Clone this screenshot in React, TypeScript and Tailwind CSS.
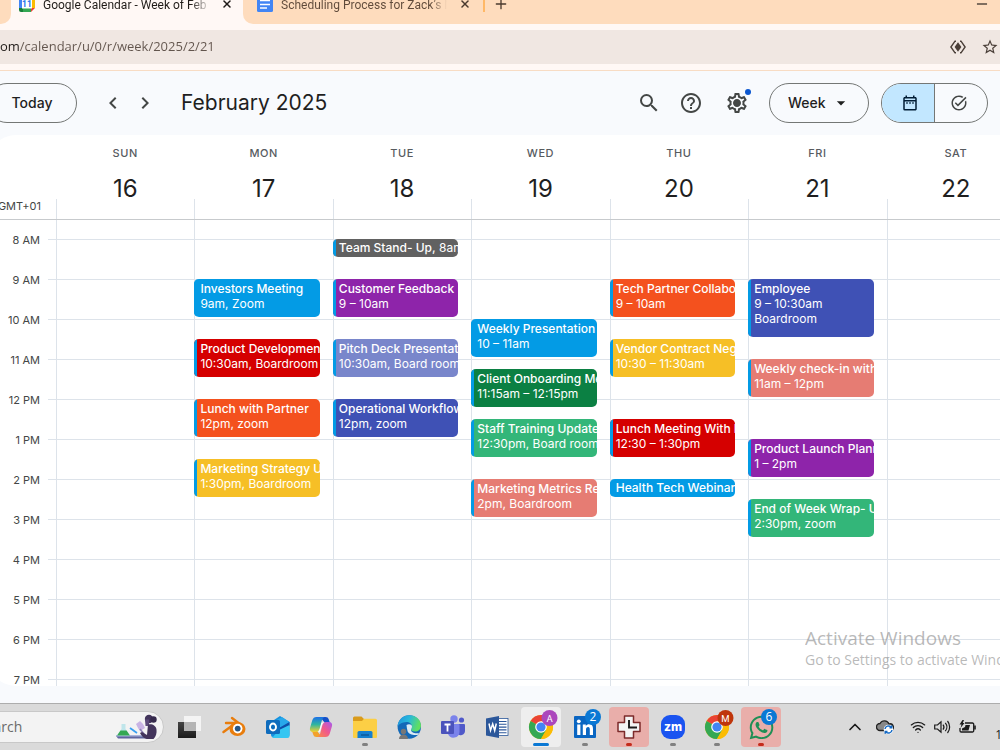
import React from "react";
import {
  MdSearch,
  MdHelpOutline,
  MdOutlineSettings,
  MdArrowDropDown,
  MdOutlineDateRange,
  MdTaskAlt,
  MdChevronLeft,
  MdChevronRight,
  MdStarBorder,
} from "react-icons/md";
import { FaWhatsapp } from "react-icons/fa";
import { X, Plus, Minus, ChevronUp, Wifi } from "lucide-react";

type CalendarEvent = {
  title: string;
  start: number;
  hours: number;
  color: string;
  lines?: string[];
  inline?: string;
};

type Day = { name: string; date: number; events: CalendarEvent[] };

const FIRST_HOUR = 8;

const DAYS: Day[] = [
  { name: "SUN", date: 16, events: [] },
  {
    name: "MON",
    date: 17,
    events: [
      { title: "Investors Meeting", start: 9, hours: 1, color: "bg-[#039be5]", lines: ["9am, Zoom"] },
      { title: "Product Development", start: 10.5, hours: 1, color: "bg-[#d50000]", lines: ["10:30am, Boardroom"] },
      { title: "Lunch with Partner", start: 12, hours: 1, color: "bg-[#f4511e]", lines: ["12pm, zoom"] },
      { title: "Marketing Strategy Update", start: 13.5, hours: 1, color: "bg-[#f6bf26]", lines: ["1:30pm, Boardroom"] },
    ],
  },
  {
    name: "TUE",
    date: 18,
    events: [
      { title: "Team Stand- Up,", start: 8, hours: 0.5, color: "bg-[#616161]", inline: "8am" },
      { title: "Customer Feedback Review", start: 9, hours: 1, color: "bg-[#8e24aa]", lines: ["9 – 10am"] },
      { title: "Pitch Deck Presentation", start: 10.5, hours: 1, color: "bg-[#7986cb]", lines: ["10:30am, Board room"] },
      { title: "Operational Workflow", start: 12, hours: 1, color: "bg-[#3f51b5]", lines: ["12pm, zoom"] },
    ],
  },
  {
    name: "WED",
    date: 19,
    events: [
      { title: "Weekly Presentation", start: 10, hours: 1, color: "bg-[#039be5]", lines: ["10 – 11am"] },
      { title: "Client Onboarding Meeting", start: 11.25, hours: 1, color: "bg-[#0b8043]", lines: ["11:15am – 12:15pm"] },
      { title: "Staff Training Update", start: 12.5, hours: 1, color: "bg-[#33b679]", lines: ["12:30pm, Board room"] },
      { title: "Marketing Metrics Review", start: 14, hours: 1, color: "bg-[#e67c73]", lines: ["2pm, Boardroom"] },
    ],
  },
  {
    name: "THU",
    date: 20,
    events: [
      { title: "Tech Partner Collaboration", start: 9, hours: 1, color: "bg-[#f4511e]", lines: ["9 – 10am"] },
      { title: "Vendor Contract Negotiation", start: 10.5, hours: 1, color: "bg-[#f6bf26]", lines: ["10:30 – 11:30am"] },
      { title: "Lunch Meeting With Partner", start: 12.5, hours: 1, color: "bg-[#d50000]", lines: ["12:30 – 1:30pm"] },
      { title: "Health Tech Webinar", start: 14, hours: 0.5, color: "bg-[#039be5]" },
    ],
  },
  {
    name: "FRI",
    date: 21,
    events: [
      { title: "Employee", start: 9, hours: 1.5, color: "bg-[#3f51b5]", lines: ["9 – 10:30am", "Boardroom"] },
      { title: "Weekly check-in with Team", start: 11, hours: 1, color: "bg-[#e67c73]", lines: ["11am – 12pm"] },
      { title: "Product Launch Planning", start: 13, hours: 1, color: "bg-[#8e24aa]", lines: ["1 – 2pm"] },
      { title: "End of Week Wrap- Up", start: 14.5, hours: 1, color: "bg-[#33b679]", lines: ["2:30pm, zoom"] },
    ],
  },
  { name: "SAT", date: 22, events: [] },
];

const HOURS = ["8 AM", "9 AM", "10 AM", "11 AM", "12 PM", "1 PM", "2 PM", "3 PM", "4 PM", "5 PM", "6 PM", "7 PM"];

/* ---------- browser chrome ---------- */

function CalendarLogo() {
  return (
    <svg viewBox="0 0 16 16" className="size-4 shrink-0">
      <path d="M0 2a2 2 0 0 1 2-2h10v4H4v8H0z" fill="#4285f4" />
      <path d="M12 0h2a2 2 0 0 1 2 2v10h-4z" fill="#fbbc04" />
      <path d="M0 12h12v4H2a2 2 0 0 1-2-2z" fill="#188038" />
      <path d="M4 12h8v4H4z" fill="#34a853" />
      <path d="M12 12h4l-4 4z" fill="#ea4335" />
      <path d="M3 3h10v9.500H3z" fill="#fff" />
      <text x="7.900" y="11" fontSize="8.500" fontWeight="700" textAnchor="middle" fill="#1a73e8" fontFamily="Roboto, sans-serif">
        11
      </text>
    </svg>
  );
}

function DocsLogo() {
  return (
    <svg viewBox="0 0 16 16" className="size-4 shrink-0">
      <rect width="16" height="16" rx="1.500" fill="#4285f4" />
      <path d="M3 4.500h10M3 8.500h10M3 12h7" stroke="#fff" strokeWidth="1.500" />
    </svg>
  );
}

function TabStrip() {
  return (
    <div className="flex h-6 shrink-0 overflow-hidden bg-[#fff8f5] font-[Roboto,'Open_Sans',sans-serif] text-xs leading-4">
      <div className="w-[11px] rounded-br-[10px] bg-[#fedcbd]" />
      <div className="flex w-[232px] items-start gap-2 pl-2">
        <div className="-mt-1">
          <CalendarLogo />
        </div>
        <span className="-mt-[3px] w-[168px] overflow-hidden bg-[linear-gradient(90deg,#1f1b18_88%,#fff8f5_100%)] bg-clip-text whitespace-nowrap text-transparent">
          Google Calendar - Week of Feb
        </span>
        <button aria-label="Close tab" className="-mt-1 flex h-4 w-4 items-center justify-center text-[#1f1b18]">
          <X className="size-3" strokeWidth={3} />
        </button>
      </div>
      <div className="flex flex-1 items-start gap-2 rounded-bl-[10px] bg-[#fedcbd] pl-[14px]">
        <div className="-mt-1">
          <DocsLogo />
        </div>
        <span className="-mt-[3px] w-[166px] overflow-hidden bg-[linear-gradient(90deg,#5f4a3a_90%,#fedcbd_100%)] bg-clip-text whitespace-nowrap text-transparent">
          Scheduling Process for Zack’s M
        </span>
        <button aria-label="Close tab" className="-mt-1 flex h-4 w-5 items-center justify-center text-[#4a3a2e]">
          <X className="size-3" strokeWidth={3} />
        </button>
        <div className="h-3 w-0.5 bg-[#ffb866]" />
        <button aria-label="New tab" className="-mt-1 flex h-4 items-center text-[#4a3a2e]">
          <Plus className="size-4" strokeWidth={2} />
        </button>
        <button aria-label="Minimize" className="-mt-1 mr-[10px] ml-auto flex h-4 items-center text-black">
          <Minus className="size-4" strokeWidth={1.500} />
        </button>
      </div>
    </div>
  );
}

function AddressBar() {
  return (
    <div className="shrink-0 border-b border-[#f8dcc4] bg-[#fff8f5] py-1.5">
      <div className="flex h-[34px] items-center bg-[#f0e7e2]">
        <input
          aria-label="Address"
          defaultValue="om/calendar/u/0/r/week/2025/2/21"
          className="min-w-0 flex-1 bg-[linear-gradient(90deg,#1f1b18_19px,#62554d_19px)] bg-clip-text font-['Open_Sans','Noto_Sans',sans-serif] text-[13px] text-transparent outline-none"
        />
        <button aria-label="Preview page" className="mr-[15px] text-[#4a3f38]">
          <svg viewBox="0 0 16 14" className="h-3.5 w-4" fill="none" stroke="currentColor" strokeWidth="1.400">
            <path d="M6 1.200H5L.9 7 5 12.800h1M10 1.200h1L15.100 7 11 12.800h-1" />
            <path d="M8 2.200 4.600 7 8 11.800 11.400 7z" fill="currentColor" stroke="none" />
          </svg>
        </button>
        <button aria-label="Bookmark" className="mr-px text-[#4a3f38]">
          <MdStarBorder className="size-[18px]" />
        </button>
      </div>
    </div>
  );
}

/* ---------- calendar ---------- */

function Header() {
  return (
    <header className="flex h-16 shrink-0 items-center pr-3 text-[#1f1f1f]">
      <button className="-ml-[13px] h-10 w-[90px] rounded-full border border-[#747775] text-sm font-medium">Today</button>
      <div className="ml-5 flex text-[#444746]">
        <button aria-label="Previous week" className="flex size-8 items-center justify-center">
          <MdChevronLeft className="size-6" />
        </button>
        <button aria-label="Next week" className="flex size-8 items-center justify-center">
          <MdChevronRight className="size-6" />
        </button>
      </div>
      <h1 className="ml-5 text-[21px] leading-7">February 2025</h1>
      <div className="ml-auto flex items-center gap-3">
        <div className="flex gap-0.5 text-[#444746]">
          <button aria-label="Search" className="flex size-10 items-center justify-center">
            <MdSearch className="size-6" />
          </button>
          <button aria-label="Help" className="flex size-10 items-center justify-center">
            <MdHelpOutline className="size-6" />
          </button>
          <button aria-label="Settings" className="relative ml-1 flex size-10 items-center justify-center">
            <MdOutlineSettings className="size-6" />
            <span className="absolute size-1.5 rounded-full bg-[#444746]" />
            <span className="absolute top-1.5 right-1.5 size-1.5 rounded-full bg-[#0b57d0]" />
          </button>
        </div>
        <div className="relative flex items-center">
          <select
            aria-label="View"
            className="h-10 w-[100px] appearance-none rounded-full border border-[#747775] pl-[18px] text-sm font-medium"
          >
            <option>Week</option>
          </select>
          <MdArrowDropDown className="pointer-events-none absolute right-[18px] size-5" />
        </div>
        <div className="flex h-10 w-[107px] overflow-hidden rounded-full border border-[#747775]">
          <button aria-label="Calendar" className="flex flex-1 items-center justify-center border-r border-[#747775] bg-[#c2e7ff] pl-1 text-[#001d35]">
            <MdOutlineDateRange className="size-[18px]" />
          </button>
          <button aria-label="Tasks" className="flex flex-1 items-center justify-center pr-1 text-[#444746]">
            <MdTaskAlt className="size-[18px]" />
          </button>
        </div>
      </div>
    </header>
  );
}

function EventCard({ event }: { event: CalendarEvent }) {
  const row = Math.round((event.start - FIRST_HOUR) * 4) + 1;
  const span = Math.round(event.hours * 4);
  return (
    <button
      className={`mr-[13px] mb-0.5 -ml-px flex min-w-0 overflow-hidden rounded-[5px] text-left text-xs leading-[15px] text-white ${event.color}`}
      style={{ gridRow: `${row} / span ${span}` }}
    >
      <span className="w-[3px] shrink-0 self-stretch bg-[#039be5]" />
      <span className={`min-w-0 flex-1 pl-[3px] whitespace-nowrap ${span > 2 ? "pt-0.5" : "pt-px"}`}>
        <span className="font-[550]">{event.title}</span>
        {event.inline && <span> {event.inline}</span>}
        {event.lines?.map((line) => (
          <span key={line} className="block">
            {line}
          </span>
        ))}
      </span>
    </button>
  );
}

function WeekView() {
  return (
    <main className="-mr-[25px] -ml-3 flex min-h-0 flex-1 flex-col overflow-hidden rounded-l-[28px] bg-white">
      <div className="grid h-[85px] shrink-0 grid-cols-[68px_repeat(7,minmax(0,1fr))] border-b border-[#c7cacd]">
        <div className="flex items-end justify-end pr-[15px] pb-[5px] text-[11px] leading-4 text-[#444746]">GMT+01</div>
        {DAYS.map((day) => (
          <div key={day.name} className="flex flex-col items-center">
            <div className="pt-2.5 text-[11px] leading-4 font-medium tracking-wider text-[#575b5f]">{day.name}</div>
            <div className="mt-3 text-2xl leading-8 text-[#1f1f1f]">{day.date}</div>
            <div className="-mt-1.5 h-5 shrink-0 self-stretch border-l border-[#dde3ea]" />
          </div>
        ))}
      </div>
      <div className="grid min-h-0 flex-1 grid-cols-1 overflow-hidden">
        <div className="col-start-1 row-start-1 pt-[19px]">
          {HOURS.map((hour) => (
            <div key={hour} className="flex h-10">
              <div className="-mt-[7px] w-[52px] text-right text-[11px] leading-4 text-[#444746]">{hour}</div>
              <div className="ml-2 flex-1 border-t border-[#dde3ea]" />
            </div>
          ))}
        </div>
        <div className="col-start-1 row-start-1 grid grid-cols-[68px_repeat(7,minmax(0,1fr))]">
          <div />
          {DAYS.map((day) => (
            <div key={day.name} className="grid grid-cols-1 grid-rows-[repeat(48,10px)] border-l border-[#dde3ea] pt-[19px]">
              {day.events.map((event) => (
                <EventCard key={event.title} event={event} />
              ))}
            </div>
          ))}
        </div>
      </div>
    </main>
  );
}

/* ---------- taskbar ---------- */

function SearchArt() {
  return (
    <svg viewBox="0 0 44 26" className="h-[26px] w-11 shrink-0">
      <path d="M1 22h32l-2 2.500H3z" fill="#5e659e" />
      <path d="M1 21h32v1.500H1z" fill="#a9b4dc" />
      <path d="M6.500 10h4v5l4.500 6.500H2L6.500 15z" fill="#bfe5ea" />
      <path d="M5.500 16.500h6l3.500 5H2z" fill="#35a853" />
      <path d="m15 14 7 5" stroke="#3aa0f0" strokeWidth="1.800" />
      <path d="m21 10 4-3 3 3 2 4-5 3-2-3z" fill="#c9b4e4" />
      <path d="m25 15 4 5" stroke="#8b7fb5" strokeWidth="1.600" fill="none" />
      <circle cx="34" cy="5" r="4.200" fill="#43355c" />
      <circle cx="38.500" cy="5.500" r="3.200" fill="#352a4c" />
      <path d="M30 5.500h4V12h-3.500z" fill="#5c4a7a" />
      <path d="M33 10.500c4-1 8 1 8.500 5 .4 4-.5 7-3 9.500h-7c-3-1-5-3-6.500-6l2-1 5 3z" fill="#43355c" />
    </svg>
  );
}

function TaskViewIcon() {
  return (
    <svg viewBox="0 0 24 24" className="size-6">
      <defs>
        <linearGradient id="tvDark" x1="0" y1="0" x2="0" y2="1">
          <stop offset="0" stopColor="#444" />
          <stop offset="1" stopColor="#1b1b1b" />
        </linearGradient>
      </defs>
      <rect x="1" y="7" width="18" height="16" fill="url(#tvDark)" />
      <rect x="7" y="1" width="17" height="15" fill="#f4f4f4" />
      <rect x="7" y="7" width="12" height="9" fill="#b5b5b5" />
    </svg>
  );
}

function BlenderIcon() {
  return (
    <svg viewBox="0 0 24 24" className="ml-0.5 size-6" fill="none">
      <path d="M10 3 18.500 9.500M4 8h12M1.500 17 13 8.500" stroke="#e87d0d" strokeWidth="2.400" strokeLinecap="round" />
      <ellipse cx="15.500" cy="14" rx="8" ry="7" fill="#e87d0d" />
      <circle cx="15.700" cy="13.600" r="4.800" fill="#fff" />
      <circle cx="15.700" cy="13.600" r="2.900" fill="#265787" />
    </svg>
  );
}

function OutlookIcon() {
  return (
    <svg viewBox="0 0 24 24" className="ml-0.5 size-6">
      <path d="M5 7 14 1l9.500 6v13a2 2 0 0 1-2 2H7a2 2 0 0 1-2-2z" fill="#1490df" />
      <path d="M8 6.500 16 2l7.500 5L14 13z" fill="#28a8ea" />
      <path d="M23.500 7 13 13v4l10.500-6z" fill="#0f4fa8" />
      <path d="M13 15 23.500 10v11a2 2 0 0 1-2 2H6z" fill="#35c6f2" />
      <rect x="0" y="5" width="14" height="14" rx="1.500" fill="#0f6cbd" />
      <ellipse cx="7" cy="12" rx="3" ry="3.500" fill="none" stroke="#fff" strokeWidth="1.900" />
    </svg>
  );
}

function CopilotIcon() {
  return (
    <svg viewBox="0 0 24 24" className="size-6">
      <defs>
        <linearGradient id="cpA" x1="0" y1="0" x2="0" y2="1">
          <stop offset="0" stopColor="#1b6fe8" />
          <stop offset=".5" stopColor="#2fb5a0" />
          <stop offset="1" stopColor="#f5d02f" />
        </linearGradient>
        <linearGradient id="cpB" x1="1" y1="0" x2="0" y2="1">
          <stop offset="0" stopColor="#a55cf0" />
          <stop offset=".5" stopColor="#f0588c" />
          <stop offset="1" stopColor="#fb8a4a" />
        </linearGradient>
      </defs>
      <path d="M11 2h5.500c1.800 0 2.800.8 3.300 2.500L21 8h-5z" fill="#1550c8" />
      <path d="M13 22H7.500c-1.800 0-2.800-.8-3.300-2.500L3 16h5z" fill="#f2a12c" />
      <path d="M7.500 2h8c-1.500.7-2.300 2-2.800 4l-2 7.500C10 16 8.700 17 6.700 17H4C1.500 17 .4 15.300 1 13l2.200-7.500C4 3 5.300 2 7.500 2z" fill="url(#cpA)" />
      <path d="M16.500 22h-8c1.500-.7 2.300-2 2.800-4l2-7.500C14 8 15.300 7 17.300 7H20c2.500 0 3.600 1.700 3 4l-2.200 7.500c-.8 2.500-2.100 3.500-4.300 3.500z" fill="url(#cpB)" />
      <path d="M15.500 7.200c-1.600.4-2.300 1.600-2.700 3.300l-1.800 6.300h-2.300c1.200-.6 1.800-1.800 2.200-3.300l1.600-5.800z" fill="#fff" />
    </svg>
  );
}

function FolderIcon() {
  return (
    <svg viewBox="0 0 24 24" className="size-6">
      <path d="M0 3a1.500 1.500 0 0 1 1.500-1.500h7L11 4v3H0z" fill="#d99b1c" />
      <path d="M0 6h9l2-2.200h11.500A1.500 1.500 0 0 1 24 5.300V22a1 1 0 0 1-1 1H1a1 1 0 0 1-1-1z" fill="#fccf45" />
      <path d="M4.500 23v-5.500A1.500 1.500 0 0 1 6 16h12a1.500 1.500 0 0 1 1.500 1.500V23z" fill="#1680d0" />
      <path d="M8 20h8" stroke="#0d5a9c" strokeWidth="1.500" />
    </svg>
  );
}

function EdgeIcon() {
  return (
    <svg viewBox="0 0 24 24" className="size-6">
      <defs>
        <linearGradient id="edTop" x1="0" y1="0" x2="1" y2=".3">
          <stop offset="0" stopColor="#1f8fdc" />
          <stop offset=".5" stopColor="#27b8dc" />
          <stop offset="1" stopColor="#5fdf62" />
        </linearGradient>
      </defs>
      <circle cx="12.300" cy="12" r="11.700" fill="#1469b8" />
      <path d="M.6 12C.6 5 6 .3 12.300.3 19 .3 24 5 24 10.500c0 4-3 6-6 6-2.500 0-4-1-4-2 0-.8 1-1 1-3C15 9 12.500 7 9.500 7 5 7 .6 10 .6 12z" fill="url(#edTop)" />
      <path d="M9.500 10C11.500 8.500 15 9 15 11.500c0 2-1 2.200-1 3.500 0 2 3.500 4 8 3-.5 1-1 1.500-1.500 2-5 .5-9-1-10-4-.5-2-.8-4-1-6z" fill="#dcebf4" />
      <circle cx="6.500" cy="16.500" r="2.700" fill="#777" />
      <path d="M2 24c0-3 2-4.500 4.500-4.500S11 21 11 24z" fill="#777" />
    </svg>
  );
}

function TeamsIcon() {
  return (
    <svg viewBox="0 0 24 24" className="size-6">
      <circle cx="20.500" cy="5" r="2.600" fill="#5059c9" />
      <path d="M16 9h7a1 1 0 0 1 1 1v6a4.500 4.500 0 0 1-8 2.500z" fill="#5059c9" />
      <circle cx="13" cy="4" r="3.700" fill="#7b83eb" />
      <path d="M8 9h9.500a1 1 0 0 1 1 1v7a6 6 0 0 1-11.500 2z" fill="#7b83eb" />
      <rect x="0" y="6" width="13" height="13" rx="1" fill="#4b53bc" />
      <path d="M3.500 9.500h6M6.500 9.500v7" stroke="#fff" strokeWidth="1.800" />
    </svg>
  );
}

function WordIcon() {
  return (
    <svg viewBox="0 0 24 24" className="size-6">
      <rect x="11" y="3.500" width="12" height="17" fill="#fff" stroke="#2b579a" strokeWidth=".8" />
      <path d="M14 6.500h7.500M14 9.300h7.500M14 12.100h7.500M14 14.900h7.500M14 17.700h7.500" stroke="#2b579a" strokeWidth="1.100" />
      <path d="M1 3.500 14 1v22L1 20.500z" fill="#2b579a" />
      <path d="m4 8.500 1.500 7L7.700 9l2 6.500 1.600-7" fill="none" stroke="#fff" strokeWidth="1.500" />
    </svg>
  );
}

function ChromeIcon({ letter, color }: { letter: string; color: string }) {
  return (
    <svg viewBox="0 0 30 30" className="-mt-[5px] ml-1 size-[30px]">
      <g transform="translate(1 5)">
        <circle cx="12" cy="12" r="12" fill="#fbbc04" />
        <path d="M12 12 1.600 6A12 12 0 0 1 22.400 6z" fill="#ea4335" />
        <path d="M12 0a12 12 0 0 1 10.400 6H12z" fill="#ea4335" />
        <path d="M1.600 6A12 12 0 0 0 12 24l5.200-9L12 12z" fill="#34a853" />
        <path d="M12 6h10.400A12 12 0 0 1 12 24l5.200-9z" fill="#fbbc04" />
        <circle cx="12" cy="12" r="5.800" fill="#fff" />
        <circle cx="12" cy="12" r="4.600" fill="#4285f4" />
      </g>
      <circle cx="21.500" cy="8" r="8" fill={color} />
      <text x="21.500" y="11.500" fontSize="9.500" textAnchor="middle" fill="#fff" fontFamily="Roboto, sans-serif">
        {letter}
      </text>
    </svg>
  );
}

function CountBadge({ count }: { count: number }) {
  return (
    <span className="absolute top-0.5 right-1 flex size-4 items-center justify-center rounded-full bg-[#0a78d4] font-['Open_Sans',sans-serif] text-xs text-white">
      {count}
    </span>
  );
}

function LinkedInIcon() {
  return (
    <svg viewBox="0 0 24 24" className="size-6">
      <rect x="1" y="1" width="22" height="22" rx="1" fill="#0a66c2" />
      <circle cx="5.800" cy="6.300" r="1.900" fill="#fff" />
      <path d="M4.200 9.500h3.200V20H4.200zM9.800 9.500h3v1.500c.7-1.200 1.900-1.800 3.300-1.800 3 0 3.900 1.900 3.900 4.700V20h-3.200v-5.500c0-1.500-.3-2.600-1.700-2.600s-2.100 1-2.100 2.600V20H9.800z" fill="#fff" />
    </svg>
  );
}

function ClockCrossIcon() {
  return (
    <svg viewBox="0 0 24 24" className="size-6" fill="none">
      <path d="M7.500 1h9v6.500H23v9h-6.500V23h-9v-6.500H1v-9h6.500z" fill="#f4f4f4" stroke="#7c2a2a" strokeWidth="1.500" strokeLinejoin="round" />
      <path d="M12 5v7.500h8" stroke="#1a1a1a" strokeWidth="1.900" />
    </svg>
  );
}

function ZoomIcon() {
  return (
    <svg viewBox="0 0 24 24" className="size-6">
      <rect width="24" height="24" rx="9" fill="#1a54f0" />
      <text x="12" y="15.500" fontSize="12" fontWeight="800" textAnchor="middle" fill="#fff" fontFamily="Inter, sans-serif">
        zm
      </text>
    </svg>
  );
}

type Task = { label: string; icon: React.ReactNode; tile?: string; mark?: string };

const TASKS: Task[] = [
  { label: "Task view", icon: <TaskViewIcon /> },
  { label: "Blender", icon: <BlenderIcon /> },
  { label: "Outlook", icon: <OutlookIcon /> },
  { label: "Copilot", icon: <CopilotIcon /> },
  { label: "File Explorer", icon: <FolderIcon />, mark: "w-1.5 bg-[#808080]" },
  { label: "Edge", icon: <EdgeIcon /> },
  { label: "Teams", icon: <TeamsIcon /> },
  { label: "Word", icon: <WordIcon /> },
  { label: "Chrome, A", icon: <ChromeIcon letter="A" color="#ab47bc" />, tile: "bg-[#eeeeee]", mark: "w-4 bg-[#0a78d4]" },
  {
    label: "LinkedIn",
    icon: (
      <>
        <LinkedInIcon />
        <CountBadge count={2} />
      </>
    ),
    mark: "w-1.5 bg-[#808080]",
  },
  { label: "Clock", icon: <ClockCrossIcon />, tile: "bg-[#e9aeaa]", mark: "w-1.5 bg-[#c42b1c]" },
  { label: "Zoom", icon: <ZoomIcon />, mark: "w-1.5 bg-[#808080]" },
  { label: "Chrome, M", icon: <ChromeIcon letter="M" color="#bf360c" />, mark: "w-1.5 bg-[#808080]" },
  {
    label: "WhatsApp",
    icon: (
      <>
        <FaWhatsapp className="size-[27px] text-[#1f8f55]" />
        <CountBadge count={6} />
      </>
    ),
    tile: "bg-[#e9aeaa]",
    mark: "w-1.5 bg-[#c42b1c]",
  },
];

function Taskbar() {
  return (
    <footer className="flex h-[47px] shrink-0 items-center overflow-hidden border-t border-[#adadad] bg-[#dadada]">
      <label className="-ml-[23px] flex h-8 w-[187px] shrink-0 items-center rounded-full border border-[#c8c8c8] bg-[#f3f3f3] pr-1">
        <input
          aria-label="Search"
          placeholder="Search"
          className="min-w-0 flex-1 bg-transparent font-['Open_Sans','Noto_Sans',sans-serif] text-sm outline-none placeholder:text-[#6a6a6a]"
        />
        <SearchArt />
      </label>
      <div className="ml-[3px] flex">
        {TASKS.map((task) => (
          <button key={task.label} aria-label={task.label} className="flex w-11 justify-center">
            <span className={`relative flex size-10 items-center justify-center rounded ${task.tile ?? ""}`}>
              {task.icon}
              {task.mark && <span className={`absolute bottom-px h-[3px] rounded-full ${task.mark}`} />}
            </span>
          </button>
        ))}
      </div>
      <div className="ml-auto flex shrink-0 items-center text-[#1a1a1a]">
        <ChevronUp className="mr-[11px] size-5" strokeWidth={2} />
        <svg viewBox="0 0 18 16" className="mr-4 h-4 w-[18px]">
          <path d="M4 11.500a3.500 3.500 0 0 1 0-7A5 5 0 0 1 13 5a3.400 3.400 0 0 1 2 6.500z" fill="#888" stroke="#222" strokeWidth="1.300" />
          <circle cx="12.500" cy="10.500" r="4.800" fill="#fff" />
          <path d="M9 10a3.500 3.500 0 0 1 6-2M15.700 6.500v2.200h-2.200M16 11a3.500 3.500 0 0 1-6 2M9.300 14.700v-2.200h2.200" fill="none" stroke="#1469c4" strokeWidth="1.500" />
        </svg>
        <Wifi className="mr-2 size-4" strokeWidth={2} />
        <svg viewBox="0 0 17 14" className="mr-2 h-3.5 w-[17px]" fill="none" stroke="currentColor" strokeWidth="1.200">
          <path d="M.7 5h2.800L7 1.800v10.400L3.500 9H.7zM9 4.500a4 4 0 0 1 0 5M11.300 2.800a6.500 6.500 0 0 1 0 8.400M13.500 1a9.500 9.500 0 0 1 0 12" />
        </svg>
        <svg viewBox="0 0 17 14" className="mr-[19px] h-3.5 w-[17px]">
          <path d="M6 3h7.500A1.200 1.200 0 0 1 14.700 4.200v6.600A1.200 1.200 0 0 1 13.500 12H2.200A1.200 1.200 0 0 1 1 10.800V8" fill="none" stroke="#1a1a1a" strokeWidth="1.300" />
          <path d="M6.500 5h4.500L9.500 10.500H3V8.500l3-1.500z" fill="#1a1a1a" />
          <path d="M15.200 5.500h1.600v4h-1.600zM3.500 0 .5 4.500h2L1.500 8l4-5H3.800L5 0z" fill="#1a1a1a" />
        </svg>
        <span className="-mr-0.5 self-end pt-4 font-['Open_Sans',sans-serif] text-xs leading-4">1</span>
      </div>
    </footer>
  );
}

export default function App() {
  return (
    <div className="relative flex h-screen flex-col overflow-hidden bg-[#f8fafd] font-[Inter,Roboto,sans-serif]">
      <TabStrip />
      <AddressBar />
      <Header />
      <WeekView />
      <div className="h-[17px] shrink-0" />
      <Taskbar />
      <div className="pointer-events-none absolute right-0 bottom-20 w-[195px] overflow-hidden font-['Open_Sans','Noto_Sans',sans-serif] whitespace-nowrap text-[#8a8a8a]/60">
        <div className="text-[19px] leading-6">Activate Windows</div>
        <div className="text-sm leading-5">Go to Settings to activate Windows.</div>
      </div>
    </div>
  );
}
